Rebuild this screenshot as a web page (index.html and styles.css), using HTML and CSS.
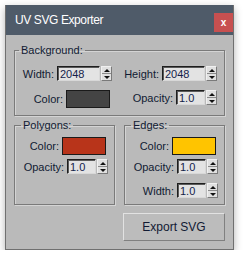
FILE: index.html
```html
<!DOCTYPE html>
<html>
  <head>
  <link rel="stylesheet" href="styles.css">
  </head>
  <body>
    <div class="window">
      <div class="titlebar">
        <span class="title">UV SVG Exporter</span>
        <span class="close">x</span>
      </div>
      <div class="content">
        <fieldset class="group">
          <legend>Background:</legend>
          <div class="bg-grid">
            <div class="row">
              <label>Width:</label>
              <input class="field wide" type="text" value="2048">
              <span class="arrows"><i class="up"></i><i class="down"></i></span>
            </div>
            <div class="row">
              <label>Height:</label>
              <input class="field wide" type="text" value="2048">
              <span class="arrows"><i class="up"></i><i class="down"></i></span>
            </div>
            <div class="row">
              <label>Color:</label>
              <span class="swatch bg-color"></span>
            </div>
            <div class="row">
              <label>Opacity:</label>
              <input class="field" type="text" value="1.0">
              <span class="arrows"><i class="up"></i><i class="down"></i></span>
            </div>
          </div>
        </fieldset>
        <div class="pair">
          <fieldset class="group">
            <legend>Polygons:</legend>
            <div class="stack">
              <div class="row">
                <label>Color:</label>
                <span class="swatch poly-color"></span>
              </div>
              <div class="row">
                <label>Opacity:</label>
                <input class="field" type="text" value="1.0">
                <span class="arrows"><i class="up"></i><i class="down"></i></span>
              </div>
            </div>
          </fieldset>
          <fieldset class="group">
            <legend>Edges:</legend>
            <div class="stack">
              <div class="row">
                <label>Color:</label>
                <span class="swatch edge-color"></span>
              </div>
              <div class="row">
                <label>Opacity:</label>
                <input class="field" type="text" value="1.0">
                <span class="arrows"><i class="up"></i><i class="down"></i></span>
              </div>
              <div class="row last">
                <label>Width:</label>
                <input class="field" type="text" value="1.0">
                <span class="arrows"><i class="up"></i><i class="down"></i></span>
              </div>
            </div>
          </fieldset>
        </div>
        <div class="actions">
          <button class="export" type="button">Export SVG</button>
        </div>
      </div>
    </div>
  </body>
</html>
```

FILE: styles.css
```css
body {
  margin: 0;
  background-color: #ffffff;
  font-family: "Liberation Sans", Arial, sans-serif;
}
.window {
  margin: 5px 0 0 5px;
  width: 229px;
  height: 245px;
  box-sizing: border-box;
  border: 1px solid #707070;
  border-top: none;
  background-color: #bababa;
  box-shadow: 0 3px 8px rgba(0, 0, 0, 0.3);
  display: flex;
  flex-direction: column;
}
.titlebar {
  height: 30px;
  flex: none;
  background-color: #4f5b69;
  display: flex;
  align-items: center;
  justify-content: space-between;
  padding-left: 9px;
}
.title {
  color: #ffffff;
  font-size: 12px;
  letter-spacing: -0.4px;
}
.close {
  width: 19px;
  height: 19px;
  align-self: flex-end;
  margin-bottom: 3px;
  background-color: #c75050;
  color: #ffffff;
  font-size: 10px;
  font-weight: bold;
  line-height: 1;
  display: flex;
  align-items: center;
  justify-content: center;
}
.content {
  flex: 1;
  padding: 8px 8px 0 8px;
}
.group {
  margin: 0;
  padding: 9px 7px 7px 7px;
  min-width: 0;
  border: 1px solid #7a7a7a;
  box-shadow: inset 1px 1px 0 #d4d4d4, 1px 1px 0 #d4d4d4;
}
legend {
  margin-left: -3px;
  padding: 0 2px;
  font-size: 11px;
  line-height: 14px;
  color: #111a33;
}
label {
  font-size: 11px;
  color: #111a33;
}
.bg-grid {
  display: grid;
  grid-template-columns: 90px 1fr;
  row-gap: 9px;
  align-items: start;
}
.row {
  display: flex;
  align-items: center;
  justify-content: flex-end;
}
.row label {
  margin-right: 3px;
}
.stack {
  padding-top: 5px;
  display: flex;
  flex-direction: column;
  gap: 4px;
}
.stack .last {
  margin-top: 5px;
}
.pair {
  display: flex;
  gap: 9px;
  margin-top: 2px;
}
.pair .group {
  flex: 1;
  padding: 0 6px 6px 6px;
}
.pair legend {
  margin-left: 0;
}
.field {
  width: 29px;
  height: 15px;
  box-sizing: border-box;
  margin: 0;
  padding: 0 2px;
  border: 1px solid;
  border-color: #1e1e1e #d8d8d8 #d8d8d8 #1e1e1e;
  box-shadow: inset 1px 1px 0 #5a5a5a;
  background-color: #e3e3e3;
  font-family: "Liberation Sans", Arial, sans-serif;
  font-size: 11px;
  color: #14224a;
}
.field.wide {
  width: 43px;
}
.arrows {
  width: 11px;
  height: 15px;
  box-sizing: border-box;
  margin-left: 1px;
  border: 1px solid;
  border-color: #f0f0f0 #7a7a7a #7a7a7a #f0f0f0;
  background-color: #e0e0e0;
  display: flex;
  flex-direction: column;
}
.arrows i {
  flex: 1;
  display: flex;
  align-items: center;
  justify-content: center;
}
.arrows .up {
  border-bottom: 1px solid #8a8a8a;
}
.arrows .up::after {
  content: "";
  border-left: 3px solid transparent;
  border-right: 3px solid transparent;
  border-bottom: 3px solid #111111;
}
.arrows .down::after {
  content: "";
  border-left: 3px solid transparent;
  border-right: 3px solid transparent;
  border-top: 3px solid #111111;
}
.swatch {
  width: 44px;
  height: 18px;
  box-sizing: border-box;
  border: 1px solid #1a1a1a;
  margin-right: 2px;
}
.bg-color { background-color: #444444; }
.poly-color { background-color: #b8341a; }
.edge-color { background-color: #ffc400; }
.actions {
  display: flex;
  justify-content: flex-end;
  margin-top: 8px;
}
.export {
  width: 102px;
  height: 28px;
  border: 1px solid;
  border-color: #e2e2e2 #808080 #808080 #e2e2e2;
  background-color: #bcbcbc;
  font-family: "Liberation Sans", Arial, sans-serif;
  font-size: 12px;
  color: #111a33;
}
```
